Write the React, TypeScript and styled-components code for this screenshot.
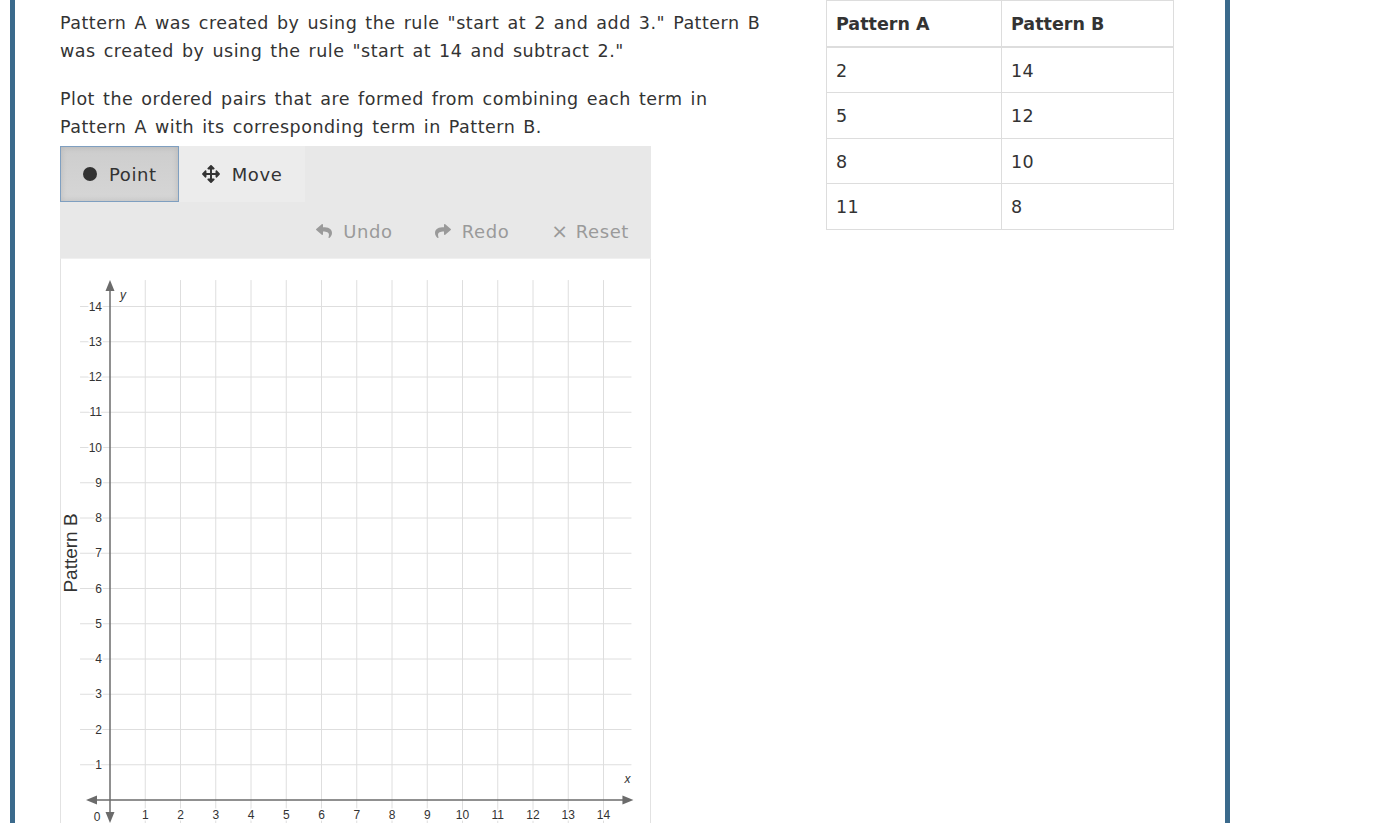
import React from 'react';
import styled, { createGlobalStyle } from 'styled-components';
import { FaReply, FaShare, FaArrowsAlt } from 'react-icons/fa';

const GlobalStyle = createGlobalStyle`
  html, body {
    margin: 0;
    padding: 0;
    background: #fff;
    overflow: hidden;
  }
  body {
    font-family: "DejaVu Sans", "Liberation Sans", sans-serif;
    color: #333;
  }
`;

const Frame = styled.div`
  box-sizing: border-box;
  margin-left: 10px;
  width: 1220px;
  height: 823px;
  border-left: 5px solid #3b6a8c;
  border-right: 5px solid #3b6a8c;
  padding-left: 45px;
  display: flex;
  align-items: flex-start;
  overflow: hidden;
`;

const LeftColumn = styled.div`
  width: 721px;
  padding-top: 9px;
`;

const Paragraph = styled.p`
  margin: 0 0 20px;
  font-size: 17.5px;
  line-height: 28px;
  letter-spacing: 0.5px;
  word-spacing: 2px;
  color: #333;
  white-space: nowrap;
  &:last-of-type {
    margin-bottom: 5px;
  }
`;

const Widget = styled.div`
  width: 591px;
`;

const Toolbar = styled.div`
  background: #e8e8e8;
  height: 112px;
  display: flex;
  flex-direction: column;
`;

const ModeRow = styled.div`
  display: flex;
  height: 56px;
`;

const ModeButton = styled.button<{ $active?: boolean }>`
  display: flex;
  align-items: center;
  gap: 12px;
  height: 56px;
  padding: 0 ${(p) => (p.$active ? 21 : 22)}px 0 22px;
  margin: 0;
  font-family: inherit;
  font-size: 18px;
  letter-spacing: 0.6px;
  color: #333;
  border: 1px solid ${(p) => (p.$active ? '#7f9fc0' : 'transparent')};
  background: ${(p) => (p.$active ? 'linear-gradient(#cdcdcd, #d6d6d6)' : '#ececec')};
  box-shadow: ${(p) => (p.$active ? 'inset 0 0 6px rgba(0,0,0,0.12)' : 'none')};
  cursor: pointer;
`;

const Dot = styled.span`
  width: 14px;
  height: 14px;
  border-radius: 50%;
  background: #333;
  display: inline-block;
`;

const ActionRow = styled.div`
  display: flex;
  justify-content: flex-end;
  align-items: center;
  gap: 42px;
  height: 56px;
  padding: 2px 22px 0 0;
`;

const ActionButton = styled.span<{ $gap?: number }>`
  display: flex;
  align-items: center;
  gap: ${(p) => p.$gap ?? 11}px;
  font-size: 18px;
  letter-spacing: 0.6px;
  color: #9a9a9a;
  svg {
    font-size: 16px;
  }
`;

const Close = styled.span`
  font-size: 20px;
  line-height: 1;
`;

const GraphArea = styled.div`
  border-left: 1px solid #e2e2e2;
  border-right: 1px solid #e2e2e2;
  border-top: 1px solid #f0f0f0;
  height: 570px;
  background: #fff;
`;

const Table = styled.table`
  margin-left: 45px;
  border-collapse: collapse;
  font-size: 17.5px;
  color: #333;
`;

const Th = styled.th`
  text-align: left;
  font-weight: 700;
  height: 45px;
  padding: 0 9px;
  border: 1px solid #ddd;
  border-bottom: 2px solid #ddd;
`;

const Td = styled.td<{ $w?: number }>`
  box-sizing: border-box;
  height: 45.5px;
  padding: 2px 9px 0;
  border: 1px solid #ddd;
  letter-spacing: 0.4px;
  width: ${(p) => (p.$w ? `${p.$w}px` : 'auto')};
`;

const U = 35.25;
const OX = 49;
const OY = 541;

const Graph: React.FC = () => {
  const nums = Array.from({ length: 14 }, (_, i) => i + 1);
  const top = OY - 14.75 * U;
  const right = OX + 14.85 * U;
  const left = OX - 0.85 * U;
  return (
    <svg width="589" height="570" style={{ display: 'block' }}>
      {nums.map((n) => (
        <line key={`v${n}`} x1={OX + n * U} y1={top} x2={OX + n * U} y2={570} stroke="#dedede" strokeWidth="1" />
      ))}
      {nums.map((n) => (
        <line key={`h${n}`} x1={left} y1={OY - n * U} x2={right - 2} y2={OY - n * U} stroke="#dedede" strokeWidth="1" />
      ))}
      <line x1={OX - 17} y1={OY} x2={right - 8} y2={OY} stroke="#6b6b6b" strokeWidth="1.5" />
      <line x1={OX} y1={top + 6} x2={OX} y2={OY + 14} stroke="#6b6b6b" strokeWidth="1.5" />
      <polygon points={`${right},${OY} ${right - 11},${OY - 4.5} ${right - 11},${OY + 4.5}`} fill="#6b6b6b" />
      <polygon points={`${OX - 24},${OY} ${OX - 13},${OY - 4.5} ${OX - 13},${OY + 4.5}`} fill="#6b6b6b" />
      <polygon points={`${OX},${top} ${OX - 4.5},${top + 11} ${OX + 4.5},${top + 11}`} fill="#6b6b6b" />
      <polygon points={`${OX},${OY + 23} ${OX - 4.5},${OY + 12} ${OX + 4.5},${OY + 12}`} fill="#6b6b6b" />
      <g fontFamily='"Liberation Sans", Arial, sans-serif' fontSize="12" fill="#333">
        {nums.map((n) => (
          <text
            key={`yl${n}`}
            x={OX - 8}
            y={OY - n * U + 4}
            textAnchor="end"
            stroke="#fff"
            strokeWidth="3"
            paintOrder="stroke"
          >
            {n}
          </text>
        ))}
        {nums.map((n) => (
          <text
            key={`xl${n}`}
            x={OX + n * U}
            y={OY + 19}
            textAnchor="middle"
            stroke="#fff"
            strokeWidth="3"
            paintOrder="stroke"
          >
            {n}
          </text>
        ))}
        <text x={OX - 13} y={OY + 21} textAnchor="middle">0</text>
        <text x={OX + 10} y={top + 19} fontStyle="italic">y</text>
        <text x={right - 9} y={OY - 17} fontStyle="italic">x</text>
      </g>
      <text
        transform={`translate(16, ${OY - 247}) rotate(-90)`}
        textAnchor="middle"
        fontFamily='"Liberation Sans", Arial, sans-serif'
        fontSize="19"
        fill="#333"
      >
        Pattern B
      </text>
    </svg>
  );
};

const rows = [
  [2, 14],
  [5, 12],
  [8, 10],
  [11, 8],
];

const App: React.FC = () => {
  return (
    <>
      <GlobalStyle />
      <Frame>
        <LeftColumn>
          <Paragraph>
            Pattern A was created by using the rule "start at 2 and add 3." Pattern B
            <br />
            was created by using the rule "start at 14 and subtract 2."
          </Paragraph>
          <Paragraph>
            Plot the ordered pairs that are formed from combining each term in
            <br />
            Pattern A with its corresponding term in Pattern B.
          </Paragraph>
          <Widget>
            <Toolbar>
              <ModeRow>
                <ModeButton $active>
                  <Dot />
                  Point
                </ModeButton>
                <ModeButton>
                  <FaArrowsAlt size={18} />
                  Move
                </ModeButton>
              </ModeRow>
              <ActionRow>
                <ActionButton>
                  <FaReply />
                  Undo
                </ActionButton>
                <ActionButton>
                  <FaShare />
                  Redo
                </ActionButton>
                <ActionButton $gap={7}>
                  <Close>×</Close>
                  Reset
                </ActionButton>
              </ActionRow>
            </Toolbar>
            <GraphArea>
              <Graph />
            </GraphArea>
          </Widget>
        </LeftColumn>
        <Table>
          <thead>
            <tr>
              <Th>Pattern A</Th>
              <Th>Pattern B</Th>
            </tr>
          </thead>
          <tbody>
            {rows.map(([a, b]) => (
              <tr key={a}>
                <Td $w={175}>{a}</Td>
                <Td $w={172}>{b}</Td>
              </tr>
            ))}
          </tbody>
        </Table>
      </Frame>
    </>
  );
};

export default App;
